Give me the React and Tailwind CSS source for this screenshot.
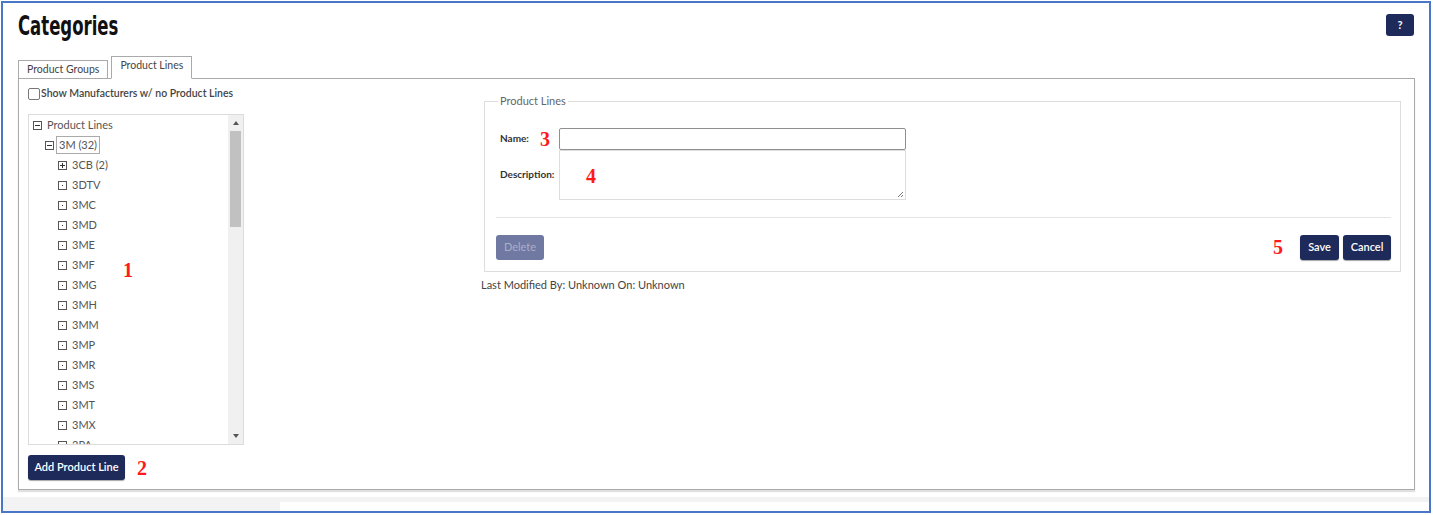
import React from 'react'

const items = ['3DTV', '3MC', '3MD', '3ME', '3MF', '3MG', '3MH', '3MM', '3MP', '3MR', '3MS', '3MT', '3MX', '3PA']

function BoxIcon({ type }) {
    return (
        <span className="relative inline-block w-[9px] h-[9px] border border-[#555] bg-white shrink-0">
            {type !== 'leaf' && (
                <span className="absolute left-[1px] right-[1px] top-[3px] h-px bg-[#333]" />
            )}
            {type === 'plus' && (
                <span className="absolute top-[1px] bottom-[1px] left-[3px] w-px bg-[#333]" />
            )}
            {type === 'leaf' && (
                <span className="absolute left-[3px] top-[3px] w-px h-px bg-[#333]" />
            )}
        </span>
    )
}

function Red({ children, className = '' }) {
    return (
        <span className={"font-['Liberation_Serif'] font-bold text-[20px] leading-none text-[#ff1a1a] " + className}>
            {children}
        </span>
    )
}

function NavyButton({ children, className = '' }) {
    return (
        <button className={"h-[25px] rounded-[3px] bg-[#1e2a5a] text-white text-[11px] font-semibold shadow-[0_1px_1px_rgba(0,0,0,0.35)] " + className}>
            {children}
        </button>
    )
}

function Tree() {
    return (
        <div className="relative w-[216px] h-[331px] mt-[14px] border border-[#dcdcdc] bg-white flex overflow-hidden">
            <div className="flex-1 text-[11px] text-[#555]">
                <div className="h-[20px] flex items-center pl-[4px] gap-[5px]">
                    <BoxIcon type="minus" />
                    <span>Product Lines</span>
                </div>
                <div className="h-[20px] flex items-center pl-[16px] gap-[2px]">
                    <BoxIcon type="minus" />
                    <span className="border border-[#aaa] px-[2px] leading-[16px]">3M (32)</span>
                </div>
                <div className="h-[20px] flex items-center pl-[29px] gap-[5px]">
                    <BoxIcon type="plus" />
                    <span>3CB (2)</span>
                </div>
                {items.map((it) => (
                    <div key={it} className="h-[20px] flex items-center pl-[29px] gap-[5px]">
                        <BoxIcon type="leaf" />
                        <span>{it}</span>
                    </div>
                ))}
            </div>
            <div className="w-[15px] h-full bg-[#f0f0f0] flex flex-col items-center">
                <div className="h-[16px] flex items-center justify-center">
                    <span className="w-0 h-0 border-l-[3px] border-r-[3px] border-b-[4px] border-l-transparent border-r-transparent border-b-[#555]" />
                </div>
                <div className="w-[11px] h-[96px] bg-[#c1c1c1]" />
                <div className="flex-1" />
                <div className="h-[16px] flex items-center justify-center">
                    <span className="w-0 h-0 border-l-[3px] border-r-[3px] border-t-[4px] border-l-transparent border-r-transparent border-t-[#555]" />
                </div>
            </div>
            <Red className="absolute left-[94px] top-[145px]">1</Red>
        </div>
    )
}

export default function App() {
    return (
        <div className="w-[1433px] h-[515px] bg-white pt-px pl-px pr-[2px] pb-[2px] font-['Lato','Open_Sans',sans-serif]">
            <div className="h-full border-2 border-[#4a76c8] flex flex-col">
                <div className="px-[15px] pr-[15px] pt-[7px] flex justify-between items-start">
                    <h1 className="inline-block origin-left scale-x-[0.68] font-['DejaVu_Sans_Condensed','DejaVu_Sans',sans-serif] [font-stretch:condensed] font-bold text-[27px] leading-[32px] text-[#111]">
                        Categories
                    </h1>
                    <button className="mt-[4px] w-[28px] h-[22px] rounded-[3px] bg-[#1e2a5a] text-white text-[11px] font-bold flex items-center justify-center">
                        ?
                    </button>
                </div>

                <div className="pl-[15px] pr-[14px] mt-[14px]">
                    <div className="flex items-end gap-[3px] relative z-10 -mb-px">
                        <div className="h-[19px] px-[8px] border border-[#aaa] bg-white text-[10.5px] text-[#444] flex items-center">
                            Product Groups
                        </div>
                        <div className="h-[23px] px-[8px] border border-[#aaa] border-b-white bg-white text-[10.5px] text-[#444] flex items-center pb-[3px]">
                            Product Lines
                        </div>
                    </div>
                    <div className="h-[412px] border border-[#aaa] bg-white shadow-[0_2px_1px_rgba(0,0,0,0.12)] flex">
                        <div className="pl-[9px] pt-[8px] w-[226px] shrink-0">
                            <label className="flex items-center h-[13px] text-[10.5px] text-[#444] font-semibold whitespace-nowrap">
                                <span className="w-[12px] h-[12px] border border-[#777] rounded-[2px] bg-white mr-[1px]" />
                                Show Manufacturers w/ no Product Lines
                            </label>
                            <Tree />
                            <div className="mt-[10px] flex items-center gap-[12px]">
                                <NavyButton className="w-[97px] h-[24px]">Add Product Line</NavyButton>
                                <Red>2</Red>
                            </div>
                        </div>

                        <div className="ml-[236px] flex-1 pr-[13px] pt-[14px]">
                            <fieldset className="ml-[3px] border border-[#ddd] pl-[11px] pr-[9px] pb-[11px]">
                                <legend className="ml-[2px] px-[2px] text-[11px] text-[#666]">Product Lines</legend>
                                <div className="mt-[18px] flex items-center pl-[4px]">
                                    <div className="w-[59px] flex items-center">
                                        <span className="text-[10px] font-bold text-[#333]">Name:</span>
                                        <Red className="ml-[11px]">3</Red>
                                    </div>
                                    <div className="w-[347px] h-[22px] border border-[#8f8f8f] rounded-[2px] bg-white" />
                                </div>
                                <div className="flex items-center pl-[4px]">
                                    <div className="w-[59px] text-[10px] font-bold text-[#333]">Description:</div>
                                    <div className="relative w-[347px] h-[50px] border border-[#ddd] bg-white">
                                        <Red className="absolute left-[26px] top-[15px]">4</Red>
                                        <svg className="absolute right-[1px] bottom-[1px]" width="7" height="7" viewBox="0 0 7 7">
                                            <path d="M6 1 L1 6 M6 4 L4 6" stroke="#777" strokeWidth="1" />
                                        </svg>
                                    </div>
                                </div>
                                <div className="mt-[17px] border-t border-[#e5e5e5]" />
                                <div className="mt-[17px] flex items-center">
                                    <button className="w-[48px] h-[25px] rounded-[3px] bg-[#6f79a2] text-[#aab0c8] text-[11px]">
                                        Delete
                                    </button>
                                    <div className="flex-1" />
                                    <Red className="mr-[17px]">5</Red>
                                    <NavyButton className="w-[39px]">Save</NavyButton>
                                    <NavyButton className="w-[48px] ml-[4px]">Cancel</NavyButton>
                                </div>
                            </fieldset>
                            <div className="mt-[5px] text-[11px] text-[#444]">Last Modified By: Unknown On: Unknown</div>
                        </div>
                    </div>
                </div>

                <div className="flex-1" />
                <div className="h-[14px] flex flex-col">
                    <div className="h-[5px] bg-[#f3f3f3]" />
                    <div className="flex-1 flex">
                        <div className="w-[277px] bg-[#f3f3f3]" />
                        <div className="flex-1 bg-white" />
                    </div>
                </div>
            </div>
        </div>
    )
}
